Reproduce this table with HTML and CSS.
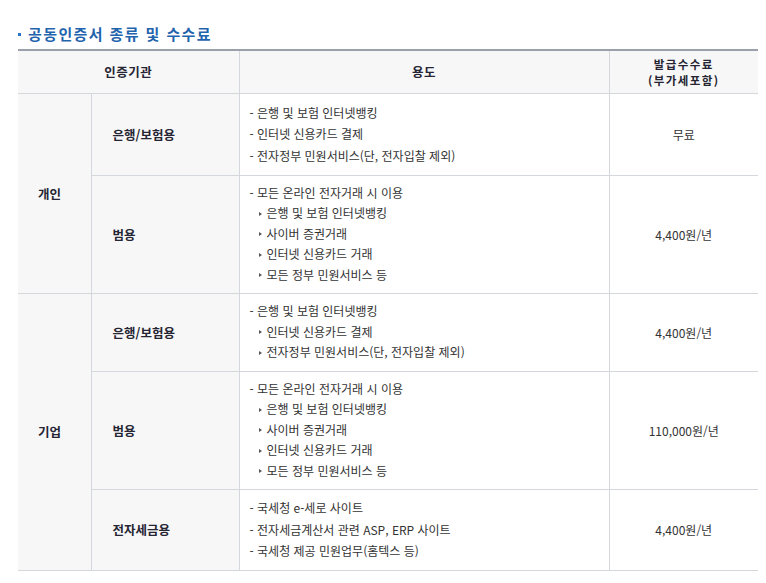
FILE: index.html
```html
<!DOCTYPE html>
<html lang="ko">
<head>
<meta charset="utf-8">
<title>공동인증서 종류 및 수수료</title>
<link rel="stylesheet" href="styles.css">
</head>
<body>
<div class="wrap">
  <h3 class="title"><span class="sq"></span>공동인증서 종류 및 수수료</h3>
  <table class="fee">
    <colgroup>
      <col class="c1"><col class="c2"><col class="c3"><col class="c4">
    </colgroup>
    <thead>
      <tr class="r-h">
        <th colspan="2">인증기관</th>
        <th>용도</th>
        <th class="feeh"><div class="hl">발급수수료</div><div class="hl">(부가세포함)</div></th>
      </tr>
    </thead>
    <tbody>
      <tr class="r1">
        <th rowspan="2" class="grp">개인</th>
        <th class="kind">은행/보험용</th>
        <td class="use wide">
          <div>- 은행 및 보험 인터넷뱅킹</div>
          <div>- 인터넷 신용카드 결제</div>
          <div>- 전자정부 민원서비스(단, 전자입찰 제외)</div>
        </td>
        <td class="price">무료</td>
      </tr>
      <tr class="r2">
        <th class="kind">범용</th>
        <td class="use">
          <div>- 모든 온라인 전자거래 시 이용</div>
          <div class="sub"><span class="tri"></span>은행 및 보험 인터넷뱅킹</div>
          <div class="sub"><span class="tri"></span>사이버 증권거래</div>
          <div class="sub"><span class="tri"></span>인터넷 신용카드 거래</div>
          <div class="sub"><span class="tri"></span>모든 정부 민원서비스 등</div>
        </td>
        <td class="price">4,400원/년</td>
      </tr>
      <tr class="r3">
        <th rowspan="3" class="grp">기업</th>
        <th class="kind">은행/보험용</th>
        <td class="use">
          <div>- 은행 및 보험 인터넷뱅킹</div>
          <div class="sub"><span class="tri"></span>인터넷 신용카드 결제</div>
          <div class="sub"><span class="tri"></span>전자정부 민원서비스(단, 전자입찰 제외)</div>
        </td>
        <td class="price">4,400원/년</td>
      </tr>
      <tr class="r4">
        <th class="kind">범용</th>
        <td class="use">
          <div>- 모든 온라인 전자거래 시 이용</div>
          <div class="sub"><span class="tri"></span>은행 및 보험 인터넷뱅킹</div>
          <div class="sub"><span class="tri"></span>사이버 증권거래</div>
          <div class="sub"><span class="tri"></span>인터넷 신용카드 거래</div>
          <div class="sub"><span class="tri"></span>모든 정부 민원서비스 등</div>
        </td>
        <td class="price">110,000원/년</td>
      </tr>
      <tr class="r5">
        <th class="kind">전자세금용</th>
        <td class="use wide">
          <div>- 국세청 e-세로 사이트</div>
          <div>- 전자세금계산서 관련 ASP, ERP 사이트</div>
          <div>- 국세청 제공 민원업무(홈텍스 등)</div>
        </td>
        <td class="price">4,400원/년</td>
      </tr>
    </tbody>
  </table>
</div>
</body>
</html>
```
FILE: styles.css
```css
html, body {
  margin: 0;
  padding: 0;
  background: #ffffff;
}
body {
  font-family: "Noto Sans CJK KR", "Noto Sans", sans-serif;
  color: #333333;
}
.wrap {
  padding: 24px 8px 0 18px;
  width: 740px;
}
.title {
  margin: 0 0 5px 0;
  display: flex;
  align-items: center;
  font-size: 15px;
  line-height: 20px;
  font-weight: bold;
  color: #1f64ad;
  letter-spacing: 1.4px;
}
.sq {
  width: 3px;
  height: 3px;
  background: #2b74c2;
  margin-right: 7px;
}
.fee {
  width: 740px;
  border-collapse: collapse;
  table-layout: fixed;
  border-top: 2px solid #9aa1ab;
  border-bottom: 1px solid #9aa1ab;
  font-size: 12px;
}
.c1 { width: 73px; }
.c2 { width: 148px; }
.c3 { width: 370px; }
.c4 { width: 149px; }
.fee th, .fee td {
  border: 1px solid #d4d7dc;
  padding: 0;
  vertical-align: middle;
}
.fee tr > :first-child { border-left: none; }
.fee tr > :last-child { border-right: none; }
.fee thead th {
  background: #f7f7f7;
  font-weight: bold;
  color: #252533;
  text-align: center;
  line-height: 16px;
  font-size: 12.5px;
  letter-spacing: 0.5px;
}
.fee thead th.feeh {
  font-size: 11.5px;
  letter-spacing: 1.4px;
}
.hl {
  height: 16px;
  line-height: 16px;
}
.fee tbody th {
  background: #f7f7f7;
  font-weight: bold;
  color: #252533;
  text-align: left;
  font-size: 12.5px;
}
.grp { padding-left: 20px !important; }
.kind { padding-left: 21px !important; }
.r-h { height: 43px; }
.r1 { height: 82px; }
.r2 { height: 118px; }
.r3 { height: 78px; }
.r4 { height: 118px; }
.r5 { height: 81px; }
.use {
  padding-left: 10px !important;
  line-height: 20.5px;
  color: #333333;
  letter-spacing: 0;
}
.use.wide { line-height: 21.5px; }
.sub {
  display: flex;
  align-items: center;
  padding-left: 9px;
}
.tri {
  width: 0;
  height: 0;
  border-left: 3px solid #555555;
  border-top: 2.5px solid transparent;
  border-bottom: 2.5px solid transparent;
  margin-right: 5px;
}
.price {
  text-align: center;
  color: #333333;
}
```
